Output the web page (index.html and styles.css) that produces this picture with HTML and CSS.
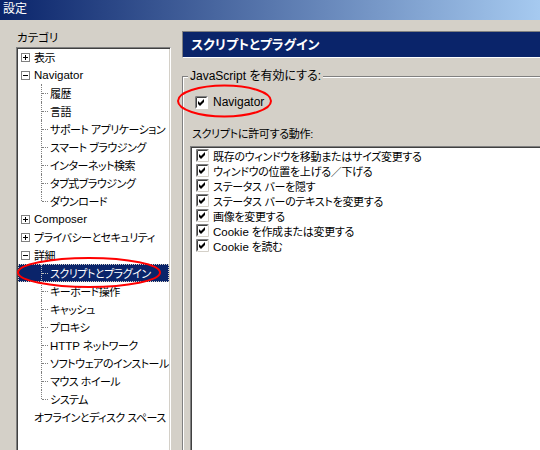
FILE: index.html
```html
<!DOCTYPE html>
<html lang="ja">
<head>
<meta charset="utf-8">
<title>設定</title>
<link rel="stylesheet" href="styles.css">
</head>
<body>
<div class="window">
  <div class="titlebar">設定</div>
  <div class="content">
    <div class="left">
      <div class="cat-label">カテゴリ</div>
      <div class="tree">
        <div class="row top"><svg class="exp" width="9" height="9" viewBox="0 0 9 9"><rect x="0.5" y="0.5" width="8" height="8" fill="#fff" stroke="#808080"/><path d="M2 4.5H7M4.5 2V7" stroke="#000" fill="none"/></svg><span>表示</span></div>
        <div class="row top"><svg class="exp" width="9" height="9" viewBox="0 0 9 9"><rect x="0.5" y="0.5" width="8" height="8" fill="#fff" stroke="#808080"/><path d="M2 4.5H7" stroke="#000" fill="none"/></svg><span class="lat">Navigator</span></div>
        <div class="row child"><span>履歴</span></div>
        <div class="row child"><span>言語</span></div>
        <div class="row child"><span>サポート アプリケーション</span></div>
        <div class="row child"><span>スマート ブラウジング</span></div>
        <div class="row child"><span>インターネット検索</span></div>
        <div class="row child"><span>タブ式ブラウジング</span></div>
        <div class="row child last"><span>ダウンロード</span></div>
        <div class="row top"><svg class="exp" width="9" height="9" viewBox="0 0 9 9"><rect x="0.5" y="0.5" width="8" height="8" fill="#fff" stroke="#808080"/><path d="M2 4.5H7M4.5 2V7" stroke="#000" fill="none"/></svg><span class="lat">Composer</span></div>
        <div class="row top"><svg class="exp" width="9" height="9" viewBox="0 0 9 9"><rect x="0.5" y="0.5" width="8" height="8" fill="#fff" stroke="#808080"/><path d="M2 4.5H7M4.5 2V7" stroke="#000" fill="none"/></svg><span>プライバシーとセキュリティ</span></div>
        <div class="row top"><svg class="exp" width="9" height="9" viewBox="0 0 9 9"><rect x="0.5" y="0.5" width="8" height="8" fill="#fff" stroke="#808080"/><path d="M2 4.5H7" stroke="#000" fill="none"/></svg><span>詳細</span></div>
        <div class="row child selected"><span>スクリプトとプラグイン</span></div>
        <div class="row child"><span>キーボード操作</span></div>
        <div class="row child"><span>キャッシュ</span></div>
        <div class="row child"><span>プロキシ</span></div>
        <div class="row child"><span><span class="lat">HTTP</span> ネットワーク</span></div>
        <div class="row child"><span>ソフトウェアのインストール</span></div>
        <div class="row child"><span>マウス ホイール</span></div>
        <div class="row child last"><span>システム</span></div>
        <div class="row leaf"><span>オフラインとディスク スペース</span></div>
      </div>
    </div>
    <div class="right">
      <div class="header">スクリプトとプラグイン</div>
      <fieldset class="group">
        <legend>JavaScript を有効にする:</legend>
        <div class="check-row nav"><svg class="cb" width="13" height="13" viewBox="0 0 13 13"><rect x="0" y="0" width="13" height="13" fill="#fff"/><path d="M0.5 12.5V0.5H12.5" stroke="#808080" fill="none"/><path d="M1.5 11.5V1.5H11.5" stroke="#404040" fill="none"/><path d="M1.5 12.5H12.5V1.5" stroke="#fff" fill="none"/><path d="M3 5L5 7L9 3V6L5 10L3 8Z" fill="#000"/></svg><span>Navigator</span></div>
        <div class="list-label">スクリプトに許可する動作:</div>
        <div class="listbox">
          <div class="check-row"><svg class="cb" width="13" height="13" viewBox="0 0 13 13"><rect x="0" y="0" width="13" height="13" fill="#fff"/><path d="M0.5 12.5V0.5H12.5" stroke="#808080" fill="none"/><path d="M1.5 11.5V1.5H11.5" stroke="#404040" fill="none"/><path d="M1.5 12.5H12.5V1.5" stroke="#d4d0c8" fill="none"/><path d="M3 5L5 7L9 3V6L5 10L3 8Z" fill="#000"/></svg><span>既存のウィンドウを移動またはサイズ変更する</span></div>
          <div class="check-row"><svg class="cb" width="13" height="13" viewBox="0 0 13 13"><rect x="0" y="0" width="13" height="13" fill="#fff"/><path d="M0.5 12.5V0.5H12.5" stroke="#808080" fill="none"/><path d="M1.5 11.5V1.5H11.5" stroke="#404040" fill="none"/><path d="M1.5 12.5H12.5V1.5" stroke="#d4d0c8" fill="none"/><path d="M3 5L5 7L9 3V6L5 10L3 8Z" fill="#000"/></svg><span>ウィンドウの位置を上げる／下げる</span></div>
          <div class="check-row"><svg class="cb" width="13" height="13" viewBox="0 0 13 13"><rect x="0" y="0" width="13" height="13" fill="#fff"/><path d="M0.5 12.5V0.5H12.5" stroke="#808080" fill="none"/><path d="M1.5 11.5V1.5H11.5" stroke="#404040" fill="none"/><path d="M1.5 12.5H12.5V1.5" stroke="#d4d0c8" fill="none"/><path d="M3 5L5 7L9 3V6L5 10L3 8Z" fill="#000"/></svg><span>ステータス バーを隠す</span></div>
          <div class="check-row"><svg class="cb" width="13" height="13" viewBox="0 0 13 13"><rect x="0" y="0" width="13" height="13" fill="#fff"/><path d="M0.5 12.5V0.5H12.5" stroke="#808080" fill="none"/><path d="M1.5 11.5V1.5H11.5" stroke="#404040" fill="none"/><path d="M1.5 12.5H12.5V1.5" stroke="#d4d0c8" fill="none"/><path d="M3 5L5 7L9 3V6L5 10L3 8Z" fill="#000"/></svg><span>ステータス バーのテキストを変更する</span></div>
          <div class="check-row"><svg class="cb" width="13" height="13" viewBox="0 0 13 13"><rect x="0" y="0" width="13" height="13" fill="#fff"/><path d="M0.5 12.5V0.5H12.5" stroke="#808080" fill="none"/><path d="M1.5 11.5V1.5H11.5" stroke="#404040" fill="none"/><path d="M1.5 12.5H12.5V1.5" stroke="#d4d0c8" fill="none"/><path d="M3 5L5 7L9 3V6L5 10L3 8Z" fill="#000"/></svg><span>画像を変更する</span></div>
          <div class="check-row"><svg class="cb" width="13" height="13" viewBox="0 0 13 13"><rect x="0" y="0" width="13" height="13" fill="#fff"/><path d="M0.5 12.5V0.5H12.5" stroke="#808080" fill="none"/><path d="M1.5 11.5V1.5H11.5" stroke="#404040" fill="none"/><path d="M1.5 12.5H12.5V1.5" stroke="#d4d0c8" fill="none"/><path d="M3 5L5 7L9 3V6L5 10L3 8Z" fill="#000"/></svg><span><span class="lat">Cookie</span> を作成または変更する</span></div>
          <div class="check-row"><svg class="cb" width="13" height="13" viewBox="0 0 13 13"><rect x="0" y="0" width="13" height="13" fill="#fff"/><path d="M0.5 12.5V0.5H12.5" stroke="#808080" fill="none"/><path d="M1.5 11.5V1.5H11.5" stroke="#404040" fill="none"/><path d="M1.5 12.5H12.5V1.5" stroke="#d4d0c8" fill="none"/><path d="M3 5L5 7L9 3V6L5 10L3 8Z" fill="#000"/></svg><span><span class="lat">Cookie</span> を読む</span></div>
        </div>
      </fieldset>
    </div>
  </div>
  <svg class="marks" width="540" height="450" viewBox="0 0 540 450">
    <ellipse cx="89" cy="272.5" rx="71" ry="14.5" fill="none" stroke="#ff0000" stroke-width="2"/>
    <ellipse cx="224.5" cy="101" rx="46.5" ry="15.5" fill="none" stroke="#ff0000" stroke-width="2"/>
  </svg>
</div>
</body>
</html>
```

FILE: styles.css
```css
html, body {
  margin: 0;
  padding: 0;
}
body {
  width: 540px;
  height: 450px;
  overflow: hidden;
  background: #d4d0c8;
  font-family: "Liberation Sans", "Noto Sans CJK JP", sans-serif;
  font-size: 12px;
  font-feature-settings: "palt";
  color: #000;
}
.window {
  position: relative;
  width: 540px;
  height: 450px;
  overflow: hidden;
}
.titlebar {
  height: 20px;
  line-height: 19px;
  padding-left: 3px;
  color: #fff;
  background: linear-gradient(to right, #0a246a, #a6caf0);
}
.content {
  display: flex;
  padding-top: 11px;
}
.left {
  padding-left: 16px;
  width: 155px;
  flex: none;
}
.cat-label {
  height: 16px;
  line-height: 14px;
  padding-left: 1px;
  font-size: 11.5px;
}
.tree {
  box-sizing: border-box;
  width: 155px;
  height: 420px;
  background: #fff;
  border-style: solid;
  border-width: 1px;
  border-color: #808080 #fff #fff #808080;
  box-shadow: inset 1px 1px 0 #404040, inset -1px -1px 0 #d4d0c8;
  padding: 0 1px 0 1px;
  font-size: 11px;
  letter-spacing: -0.5px;
}
.lat {
  letter-spacing: 0;
  font-size: 11.5px;
}
.row {
  position: relative;
  height: 18px;
  display: flex;
  align-items: center;
  white-space: nowrap;
}
.row.top {
  padding-left: 3px;
}
.exp {
  flex: none;
  margin-right: 4px;
}
.row.leaf {
  padding-left: 16px;
}
.row.child {
  padding-left: 32px;
}
.row.child::before {
  content: "";
  position: absolute;
  left: 23px;
  top: 0;
  height: 18px;
  border-left: 1px dotted #808080;
}
.row.child.last::before {
  height: 9px;
}
.row.child::after {
  content: "";
  position: absolute;
  left: 24px;
  top: 9px;
  width: 6px;
  border-top: 1px dotted #808080;
}
.row.selected {
  background: #0a246a;
  color: #fff;
  outline: 1px dotted #d4d0c8;
  outline-offset: -1px;
}
.row.selected::before,
.row.selected::after {
  border-color: #c0c0c0;
}
.right {
  margin-left: 11px;
  width: 380px;
  flex: none;
}
.header {
  box-sizing: border-box;
  height: 27px;
  line-height: 25px;
  padding-left: 8px;
  background: #0a246a;
  color: #fff;
  font-size: 13px;
  font-weight: bold;
  border-style: solid;
  border-width: 1px;
  border-color: #808080 #fff #fff #808080;
}
.group {
  margin: 11px 0 0 0;
  padding: 0;
  border: 1px solid #808080;
  box-shadow: inset 1px 1px 0 #fff;
  height: 400px;
  min-width: 0;
}
.group legend {
  margin-left: 5px;
  padding: 0 2px;
  line-height: 14px;
  background: #d4d0c8;
}
.check-row {
  display: flex;
  align-items: center;
  height: 15px;
  white-space: nowrap;
}
.cb {
  flex: none;
  margin-right: 4px;
}
.nav {
  margin-top: 12px;
  padding-left: 12px;
  height: 14px;
}
.nav .cb {
  margin-right: 5px;
}
.list-label {
  margin-top: 18px;
  padding-left: 9px;
  height: 14px;
  line-height: 14px;
  font-size: 11px;
  letter-spacing: -0.3px;
}
.listbox {
  box-sizing: border-box;
  margin: 5px 0 0 7px;
  height: 320px;
  background: #fff;
  border-style: solid;
  border-width: 1px;
  border-color: #808080 #fff #fff #808080;
  box-shadow: inset 1px 1px 0 #404040;
  padding: 1px 0 0 5px;
  font-size: 11px;
  letter-spacing: -0.3px;
}
.marks {
  position: absolute;
  left: 0;
  top: 0;
  pointer-events: none;
}
```
